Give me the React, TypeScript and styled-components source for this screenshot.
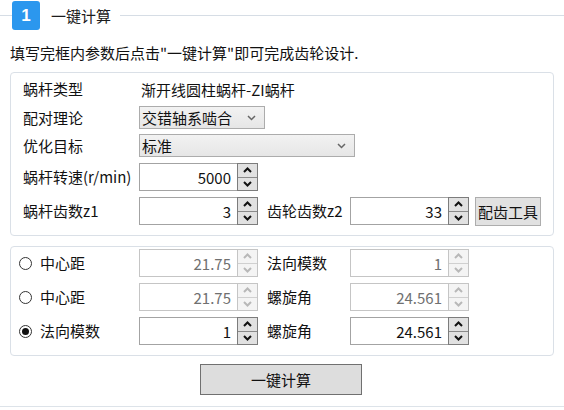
import React from 'react';
import styled, { createGlobalStyle } from 'styled-components';

const GlobalStyle = createGlobalStyle`
  html, body {
    margin: 0;
    padding: 0;
    background: #ffffff;
  }
  body {
    font-family: "Noto Sans CJK SC", "Microsoft YaHei", "Liberation Sans", sans-serif;
    color: #111111;
  }
`;

const Page = styled.div`
  width: 564px;
  height: 410px;
  position: relative;
  overflow: hidden;
  background: #ffffff;
  font-size: 15px;
`;

const Header = styled.div`
  display: flex;
  align-items: center;
  height: 29px;
  padding-top: 1px;
`;

const HeaderLine = styled.div<{ $grow?: boolean }>`
  height: 1px;
  background: #d6dde5;
  width: ${p => (p.$grow ? 'auto' : '12px')};
  flex: ${p => (p.$grow ? 1 : 'none')};
`;

const StepBadge = styled.div`
  width: 28px;
  height: 29px;
  border-radius: 3px;
  background: #2b97ee;
  color: #ffffff;
  font-family: "Liberation Sans", Arial, sans-serif;
  font-weight: 700;
  font-size: 17px;
  display: flex;
  align-items: center;
  justify-content: center;
`;

const HeaderTitle = styled.div`
  margin: 0 9px 0 11px;
  font-size: 15px;
  line-height: 20px;
  color: #1c1c1c;
`;

const Description = styled.div`
  margin: 12px 0 0 10px;
  height: 22px;
  line-height: 22px;
  white-space: nowrap;
`;

const Panel = styled.div<{ $top: number; $padTop: number; $padBottom: number }>`
  margin: ${p => p.$top}px 10px 0 10px;
  border: 1px solid #dae0e7;
  border-radius: 4px;
  padding: ${p => p.$padTop}px 12px ${p => p.$padBottom}px 12px;
  display: flex;
  flex-direction: column;
`;

const Row = styled.div<{ $h: number; $gap?: number }>`
  display: flex;
  align-items: center;
  height: ${p => p.$h}px;
  margin-top: ${p => p.$gap || 0}px;
`;

const Label = styled.div<{ $w: number }>`
  width: ${p => p.$w}px;
  flex: none;
  white-space: nowrap;
  line-height: 20px;
`;

const Value = styled.div`
  padding-left: 2px;
  white-space: nowrap;
`;

const Combo = styled.div<{ $w: number }>`
  width: ${p => p.$w}px;
  height: 23px;
  box-sizing: border-box;
  border: 1px solid #acacac;
  background: linear-gradient(#f2f2f2, #e6e6e6);
  display: flex;
  align-items: center;
  justify-content: space-between;
  padding: 0 8px 0 2px;
  line-height: 20px;
  color: #111;
`;

const SpinWrap = styled.div`
  display: flex;
  height: 28px;
  flex: none;
`;

const SpinInput = styled.input<{ $disabled?: boolean }>`
  width: 98px;
  height: 28px;
  box-sizing: border-box;
  border: 1px solid ${p => (p.$disabled ? '#c5c5c5' : '#a3a3a3')};
  border-right: none;
  background: #ffffff;
  text-align: right;
  padding: 0 6px 0 4px;
  margin: 0;
  font-family: "Noto Sans CJK SC", "Liberation Sans", sans-serif;
  font-size: 15px;
  color: ${p => (p.$disabled ? '#707070' : '#111111')};
  outline: none;
`;

const SpinButtons = styled.div<{ $disabled?: boolean }>`
  width: 21px;
  box-sizing: border-box;
  border: 1px solid ${p => (p.$disabled ? '#c5c5c5' : '#7c7c7c')};
  display: flex;
  flex-direction: column;
  background: ${p => (p.$disabled ? '#f4f4f4' : '#e1e1e1')};
`;

const SpinHalf = styled.div<{ $disabled?: boolean; $top?: boolean }>`
  flex: 1;
  display: flex;
  align-items: center;
  justify-content: center;
  border-bottom: ${p => (p.$top ? `1px solid ${p.$disabled ? '#d0d0d0' : '#8a8a8a'}` : 'none')};
`;

const SideLabel = styled.div`
  width: 83px;
  margin-left: 9px;
  flex: none;
  white-space: nowrap;
  line-height: 20px;
`;

const ToolButton = styled.button`
  margin-left: 6px;
  width: 68px;
  height: 29px;
  border: 1px solid #adadad;
  background: #e1e1e1;
  font-family: "Noto Sans CJK SC", sans-serif;
  font-size: 15px;
  color: #111;
  padding: 0;
`;

const Radio = styled.span<{ $checked?: boolean }>`
  width: 13px;
  height: 13px;
  box-sizing: border-box;
  border: 1px solid #333333;
  border-radius: 50%;
  background: #ffffff;
  display: flex;
  align-items: center;
  justify-content: center;
  margin-right: 8px;
  flex: none;

  &::after {
    content: '';
    width: 7px;
    height: 7px;
    border-radius: 50%;
    background: ${p => (p.$checked ? '#111111' : 'transparent')};
  }
`;

const RadioLabel = styled.div`
  display: flex;
  align-items: center;
  width: 120px;
  margin-left: -4px;
  flex: none;
  white-space: nowrap;
  line-height: 20px;
`;

const Footer = styled.div`
  display: flex;
  justify-content: center;
  margin-top: 8px;
  padding-right: 2px;
`;

const CalcButton = styled.button`
  width: 162px;
  height: 31px;
  border: 1px solid #707070;
  background: #dddddd;
  font-family: "Noto Sans CJK SC", sans-serif;
  font-size: 15px;
  color: #111;
  padding: 0;
`;

const BottomLine = styled.div`
  position: absolute;
  left: 0;
  right: 0;
  top: 406px;
  height: 1px;
  background: #dde3e9;
`;

const Chevron: React.FC<{ up?: boolean; color?: string; weight?: number }> = ({ up, color = '#111', weight = 2 }) => (
  <svg width={9} height={6} viewBox="0 0 9 6">
    <polyline
      points={up ? '1,5 4.5,1.5 8,5' : '1,1 4.5,4.5 8,1'}
      fill="none"
      stroke={color}
      strokeWidth={weight}
    />
  </svg>
);

const Spin: React.FC<{ value: string; disabled?: boolean }> = ({ value, disabled }) => {
  const c = disabled ? '#b8b8b8' : '#111111';
  return (
    <SpinWrap>
      <SpinInput $disabled={disabled} value={value} readOnly />
      <SpinButtons $disabled={disabled}>
        <SpinHalf $top $disabled={disabled}>
          <Chevron up color={c} />
        </SpinHalf>
        <SpinHalf $disabled={disabled}>
          <Chevron color={c} />
        </SpinHalf>
      </SpinButtons>
    </SpinWrap>
  );
};

export default function App() {
  return (
    <Page>
      <GlobalStyle />
      <Header>
        <HeaderLine />
        <StepBadge>1</StepBadge>
        <HeaderTitle>一键计算</HeaderTitle>
        <HeaderLine $grow />
      </Header>
      <Description>填写完框内参数后点击"一键计算"即可完成齿轮设计.</Description>

      <Panel $top={8} $padTop={4} $padBottom={10}>
        <Row $h={24}>
          <Label $w={116}>蜗杆类型</Label>
          <Value>渐开线圆柱蜗杆-ZI蜗杆</Value>
        </Row>
        <Row $h={23} $gap={5}>
          <Label $w={116}>配对理论</Label>
          <Combo $w={126}>
            <span>交错轴系啮合</span>
            <Chevron color="#666" weight={1.5} />
          </Combo>
        </Row>
        <Row $h={23} $gap={5}>
          <Label $w={116}>优化目标</Label>
          <Combo $w={216}>
            <span>标准</span>
            <Chevron color="#666" weight={1.5} />
          </Combo>
        </Row>
        <Row $h={28} $gap={6}>
          <Label $w={116}>蜗杆转速(r/min)</Label>
          <Spin value="5000" />
        </Row>
        <Row $h={28} $gap={6}>
          <Label $w={116}>蜗杆齿数z1</Label>
          <Spin value="3" />
          <SideLabel>齿轮齿数z2</SideLabel>
          <Spin value="33" />
          <ToolButton>配齿工具</ToolButton>
        </Row>
      </Panel>

      <Panel $top={10} $padTop={2} $padBottom={10}>
        <Row $h={28}>
          <RadioLabel>
            <Radio />
            中心距
          </RadioLabel>
          <Spin value="21.75" disabled />
          <SideLabel>法向模数</SideLabel>
          <Spin value="1" disabled />
        </Row>
        <Row $h={28} $gap={6}>
          <RadioLabel>
            <Radio />
            中心距
          </RadioLabel>
          <Spin value="21.75" disabled />
          <SideLabel>螺旋角</SideLabel>
          <Spin value="24.561" disabled />
        </Row>
        <Row $h={28} $gap={6}>
          <RadioLabel>
            <Radio $checked />
            法向模数
          </RadioLabel>
          <Spin value="1" />
          <SideLabel>螺旋角</SideLabel>
          <Spin value="24.561" />
        </Row>
      </Panel>

      <Footer>
        <CalcButton>一键计算</CalcButton>
      </Footer>
      <BottomLine />
    </Page>
  );
}
